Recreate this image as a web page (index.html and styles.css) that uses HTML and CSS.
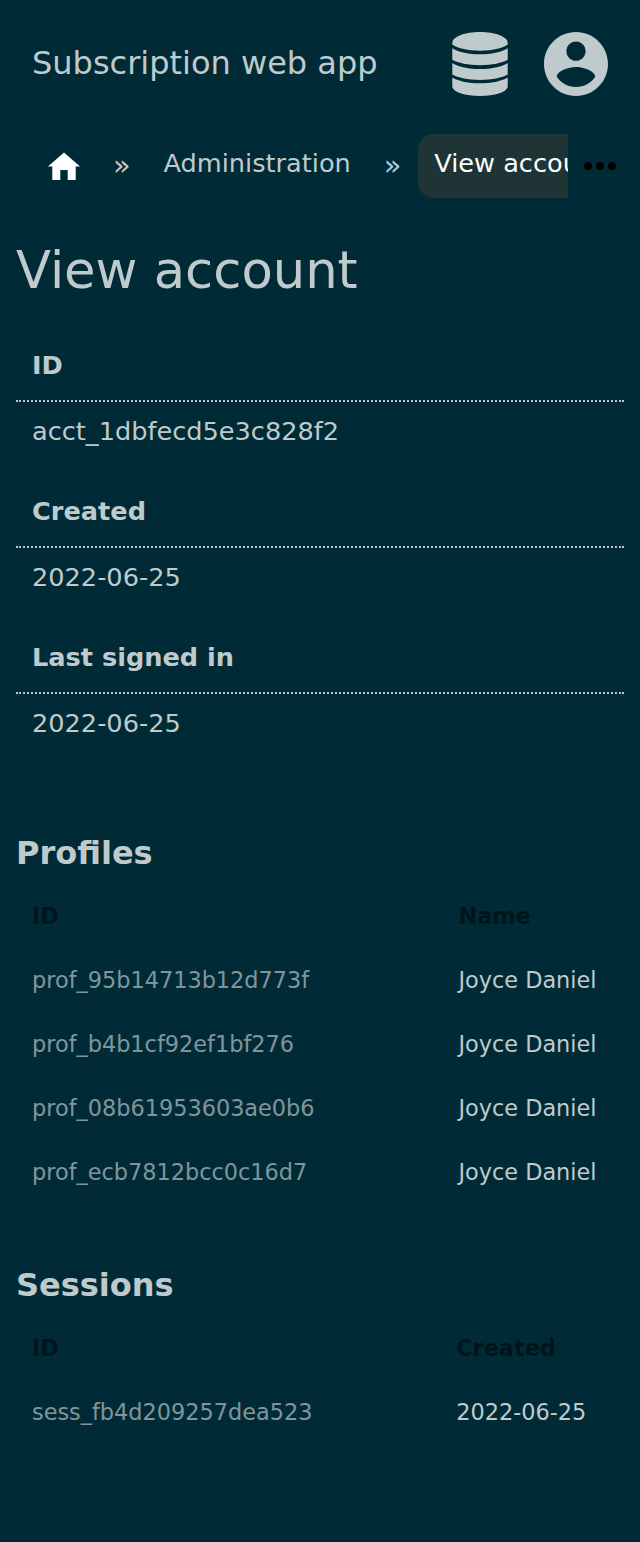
FILE: index.html
```html
<!DOCTYPE html>
<html lang="en">
<head>
<meta charset="utf-8">
<title>View account</title>
<link rel="stylesheet" href="styles.css">
</head>
<body>
<header class="topbar">
  <span class="brand">Subscription web app</span>
  <nav class="actions">
    <svg class="db" viewBox="0 0 56 64"><path d="M.3 10.500C1 4.500 13 0 28 0s27 4.500 27.700 10.500v2C50 16.500 40 18.700 28 18.700S6 16.500.3 12.500z"/><path d="M.3 16.300C7 20.300 17 22.300 28 22.300s21-2 27.700-6v11.500C50 31 40 33.200 28 33.200S6 31 .3 27.800z"/><path d="M.3 31C7 35 17 37 28 37s21-2 27.700-6v11.500C50 45.700 40 47.900 28 47.900S6 45.700.3 42.500z"/><path d="M.3 45.500C7 49.500 17 51.300 28 51.300s21-1.800 27.700-5.800V55C54 60.500 43 64 28 64S2 60.500.3 55z"/></svg>
    <svg class="user" viewBox="2 2 20 20"><path d="M12 2C6.480 2 2 6.480 2 12s4.480 10 10 10 10-4.480 10-10S17.520 2 12 2zm0 3c1.660 0 3 1.340 3 3s-1.340 3-3 3-3-1.340-3-3 1.340-3 3-3zm0 14.200c-2.500 0-4.710-1.280-6-3.220.030-1.990 4-3.080 6-3.080 1.990 0 5.970 1.090 6 3.080-1.290 1.940-3.500 3.220-6 3.220z"/></svg>
  </nav>
</header>
<nav class="crumbs">
  <div class="trail">
    <a class="home"><svg viewBox="0 0 32 28"><path d="M16 .5L32 14.500h-4.300V28h-8V18h-7.400v10h-8V14.500H0z"/></svg></a>
    <span class="sep">»</span>
    <a class="crumb">Administration</a>
    <span class="sep">»</span>
    <a class="crumb current">View account</a>
  </div>
  <svg class="more" viewBox="0 0 32 8"><circle cx="4" cy="4" r="4"/><circle cx="16" cy="4" r="4"/><circle cx="28" cy="4" r="4"/></svg>
</nav>
<main>
  <h1>View account</h1>
  <dl>
    <dt>ID</dt><dd>acct_1dbfecd5e3c828f2</dd>
    <dt>Created</dt><dd>2022-06-25</dd>
    <dt>Last signed in</dt><dd>2022-06-25</dd>
  </dl>
  <h2>Profiles</h2>
  <div class="table profiles">
    <div class="row head"><span>ID</span><span>Name</span></div>
    <div class="row"><a>prof_95b14713b12d773f</a><span>Joyce Daniel</span></div>
    <div class="row"><a>prof_b4b1cf92ef1bf276</a><span>Joyce Daniel</span></div>
    <div class="row"><a>prof_08b61953603ae0b6</a><span>Joyce Daniel</span></div>
    <div class="row"><a>prof_ecb7812bcc0c16d7</a><span>Joyce Daniel</span></div>
  </div>
  <h2>Sessions</h2>
  <div class="table sessions">
    <div class="row head"><span>ID</span><span>Created</span></div>
    <div class="row"><a>sess_fb4d209257dea523</a><span>2022-06-25</span></div>
  </div>
</main>
</body>
</html>
```
FILE: styles.css
```css
* { box-sizing: border-box; }
body {
  margin: 0;
  min-height: 1542px;
  background: #002b36;
  color: #bfcacd;
  font-family: "DejaVu Sans", sans-serif;
  font-size: 25.6px;
}
svg { display: block; fill: currentColor; }
.topbar { display: flex; justify-content: space-between; align-items: center; height: 128px; padding: 0 32px; }
.brand { font-size: 32px; line-height: 48px; padding-bottom: 2px; }
.actions { display: flex; gap: 36px; }
.db { width: 56px; height: 64px; }
.user { width: 64px; height: 64px; }
.crumbs { display: flex; height: 80px; padding: 6px 24px 10px 0; }
.trail { display: flex; width: 568px; overflow: hidden; white-space: nowrap; line-height: 58px; }
.home { width: 112px; padding: 18px 0 0 48px; color: #fff; flex: none; }
.home svg { width: 32px; height: 28px; }
.sep { flex: none; width: 35.5px; padding-left: 1px; line-height: 62px; font-size: 28.8px; }
.crumb { flex: none; padding: 0 16px; }
.crumb + .sep { margin-left: 16px; }
.crumb:not(.current) { margin-right: 0; }
.current { background: #1f3434; color: #fff; border-radius: 16px; }
.more { width: 32px; height: 8px; margin: 28px 0 0 16px; color: #000; flex: none; }
main { padding: 0 16px; }
h1 { margin: 0; padding-top: 24px; font-size: 51.2px; line-height: 77px; font-weight: 400; }
dl { margin: 24px 0 58px; }
dt, dd { margin: 0; padding: 0 16px; }
dt { height: 69px; line-height: 64px; font-weight: 700; border-bottom: 2px dotted #bfcacd; }
dd { height: 77px; line-height: 58px; }
h2 { margin: 0 0 7px; font-size: 32px; line-height: 48px; font-weight: 700; }
.table { font-size: 22.4px; }
.row { display: grid; grid-template-columns: 426.4px 1fr; padding-left: 16px; line-height: 64px; height: 64px; }
.sessions .row { grid-template-columns: 424.2px 1fr; }
.row a { color: #80959b; }
.head { color: #00151b; font-weight: 700; }
.profiles { margin-bottom: 57px; }
```
